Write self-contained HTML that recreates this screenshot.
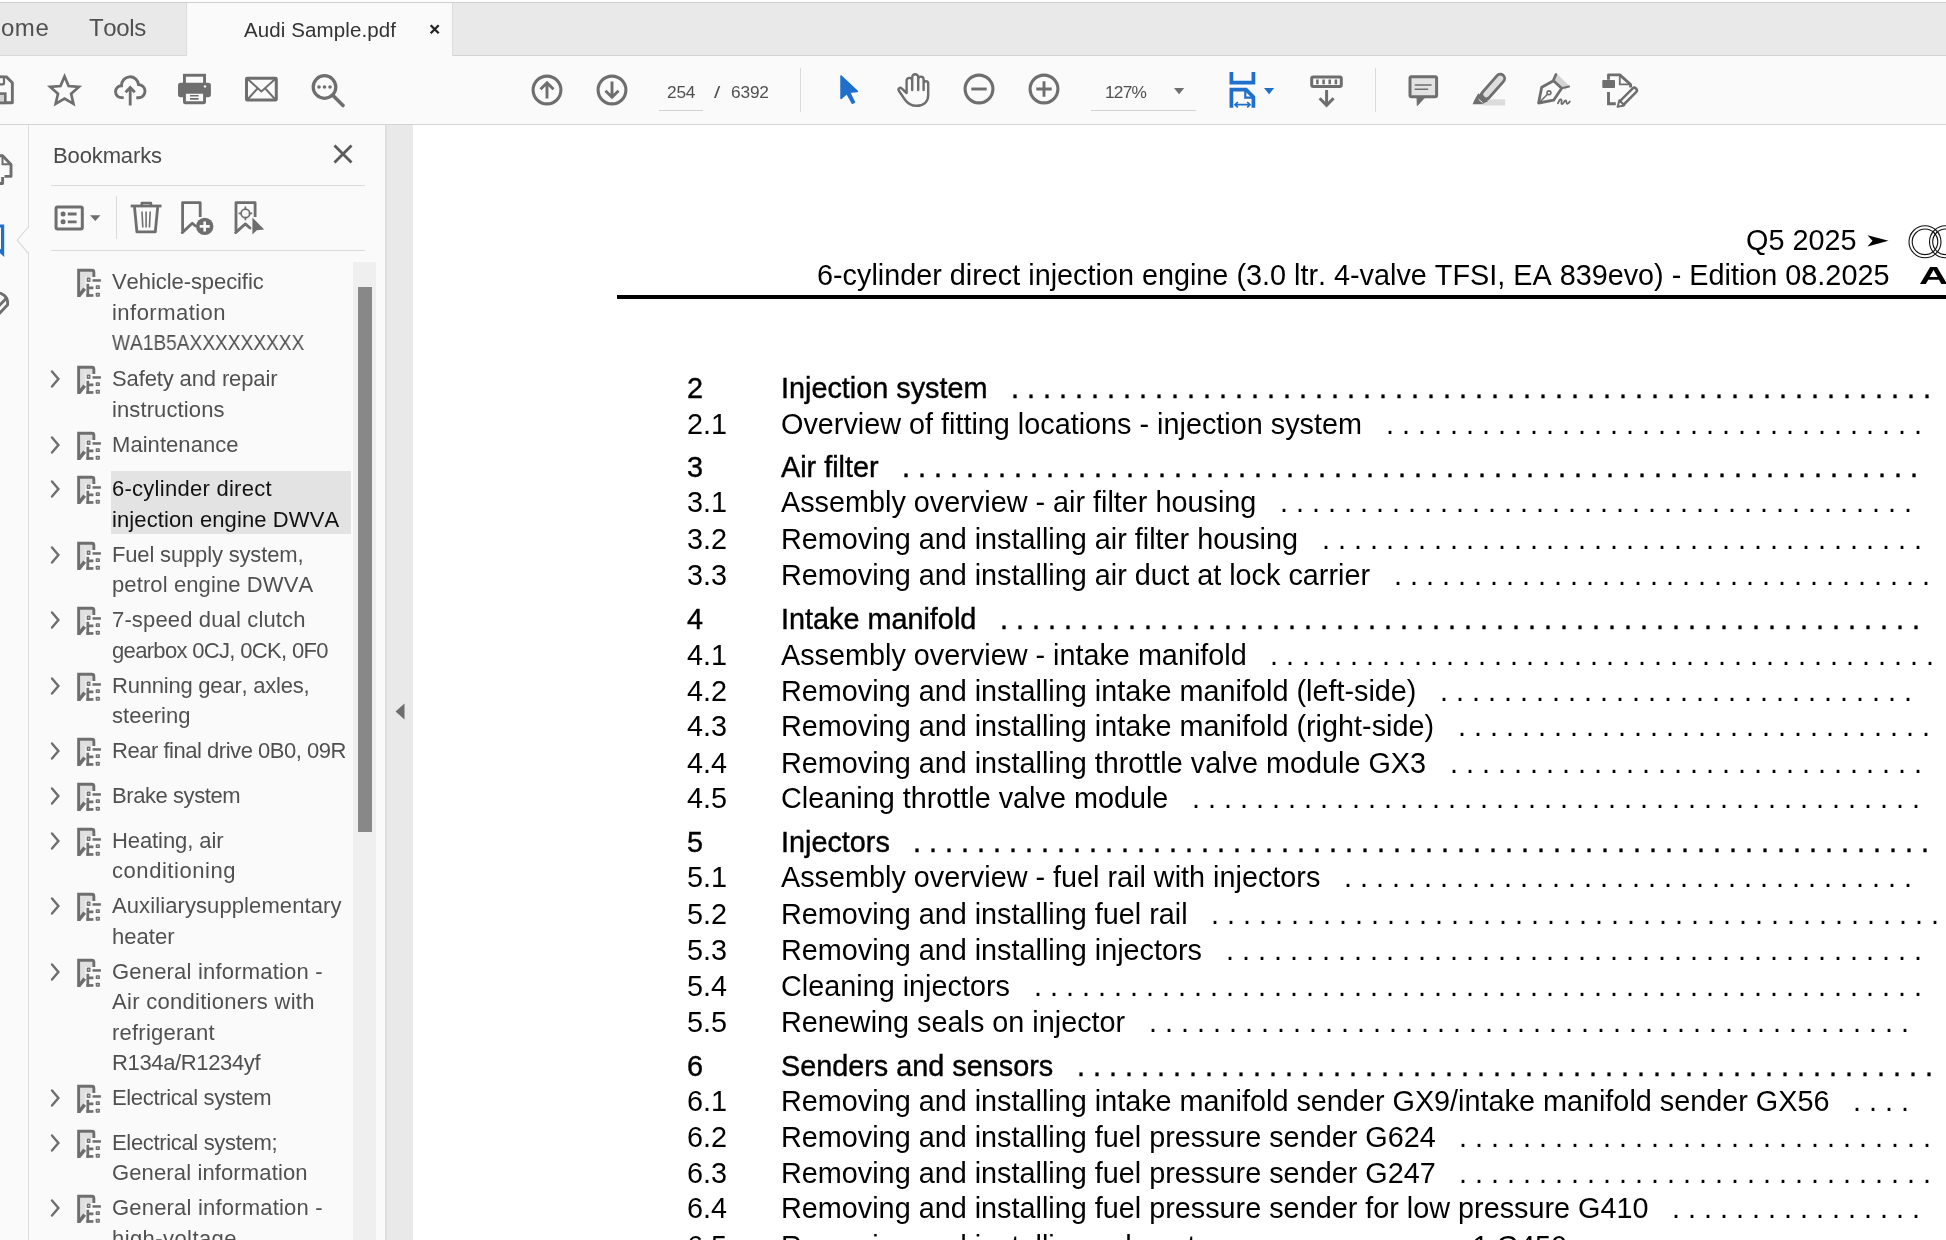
<!DOCTYPE html>
<html lang="en"><head><meta charset="utf-8"><title>Audi Sample.pdf</title>
<style>
html,body{margin:0;padding:0;}
body{width:1946px;height:1240px;overflow:hidden;position:relative;background:#fafafa;font-family:"Liberation Sans",sans-serif;}
.t{font-kerning:none;font-variant-ligatures:none;position:absolute;will-change:transform;white-space:pre;font-family:"Liberation Sans",sans-serif;}
.b{position:absolute;}
svg{position:absolute;overflow:visible;}
.hb{-webkit-text-stroke:0.42px #000;}

</style></head>
<body>
<div class="b" style="left:0px;top:0px;width:1946px;height:2px;background:#fdfdfd;"></div>
<div class="b" style="left:0px;top:2px;width:1946px;height:1px;background:#cfcfcf;"></div>
<div class="b" style="left:0px;top:3px;width:1946px;height:52px;background:#e9e9e9;"></div>
<div class="b" style="left:0px;top:55px;width:186px;height:1px;background:#d8d8d8;"></div>
<div class="b" style="left:453px;top:55px;width:1493px;height:1px;background:#d2d2d2;"></div>
<div class="b" style="left:185.5px;top:3px;width:267.5px;height:53px;background:#fafafa;border-left:1px solid #dcdcdc;border-right:1px solid #dcdcdc;box-sizing:border-box;"></div>
<div class="t" style="left:-17.30px;top:10px;font-size:24px;line-height:35px;height:35px;color:#505050;letter-spacing:0.593px;">Home</div>
<div class="t" style="left:89.30px;top:10px;font-size:24px;line-height:35px;height:35px;color:#505050;letter-spacing:-0.382px;">Tools</div>
<div class="t" style="left:244.00px;top:14px;font-size:20.5px;line-height:31px;height:31px;color:#333;letter-spacing:0.112px;">Audi Sample.pdf</div>
<svg style="left:428px;top:22px" width="14" height="14" viewBox="0 0 14 14" fill="none"><path d="M2.700 3.200 L10.700 11.200 M10.700 3.200 L2.700 11.200" stroke="#222" stroke-width="2.300"/></svg>
<div class="b" style="left:0px;top:56px;width:1946px;height:68px;background:#fafafa;"></div>
<div class="b" style="left:0px;top:124px;width:1946px;height:1px;background:#d4d4d4;"></div>
<svg style="left:309px;top:72px" width="38" height="38" viewBox="0 0 38 38" fill="none"><circle cx="15.5" cy="15" r="11.3" stroke="#6e6e6e" stroke-width="3.2"/><path d="M24 23.5 L34 33.5" stroke="#6e6e6e" stroke-width="3.6" stroke-linecap="round"/><circle cx="10" cy="15" r="1.8" fill="#6e6e6e"/><circle cx="15.5" cy="15" r="1.8" fill="#6e6e6e"/><circle cx="21" cy="15" r="1.8" fill="#6e6e6e"/></svg>
<svg style="left:528.5px;top:71.7px" width="36" height="36" viewBox="0 0 36 36" fill="none"><circle cx="18" cy="18" r="13.900" stroke="#6e6e6e" stroke-width="3.100"/><path d="M18 26.500 V11 M11.500 17.300 L18 10.800 L24.500 17.300" stroke="#6e6e6e" stroke-width="2.900"/></svg>
<svg style="left:593.9px;top:71.7px" width="36" height="36" viewBox="0 0 36 36" fill="none"><circle cx="18" cy="18" r="13.900" stroke="#6e6e6e" stroke-width="3.100"/><path d="M18 9.500 V25 M11.500 18.700 L18 25.200 L24.500 18.700" stroke="#6e6e6e" stroke-width="2.900"/></svg>
<div class="t" style="left:666.50px;top:78px;font-size:17.3px;line-height:28px;height:28px;color:#505050;letter-spacing:-0.182px;">254</div>
<div class="b" style="left:659px;top:110px;width:44px;height:1px;background:#d2d2d2;"></div>
<div class="t" style="left:713.50px;top:78px;font-size:17.3px;line-height:28px;height:28px;color:#505050;transform:scaleX(1.300);transform-origin:0 0;">/</div>
<div class="t" style="left:730.70px;top:78px;font-size:17.3px;line-height:28px;height:28px;color:#505050;letter-spacing:-0.162px;">6392</div>
<div class="b" style="left:799.5px;top:68px;width:1px;height:44px;background:#dadada;"></div>
<svg style="left:960.7px;top:71.2px" width="36" height="36" viewBox="0 0 36 36" fill="none"><circle cx="18" cy="18" r="13.900" stroke="#6e6e6e" stroke-width="3.100"/><path d="M10.300 18 H25.700" stroke="#6e6e6e" stroke-width="2.900"/></svg>
<svg style="left:1026.4px;top:71.2px" width="36" height="36" viewBox="0 0 36 36" fill="none"><circle cx="18" cy="18" r="13.900" stroke="#6e6e6e" stroke-width="3.100"/><path d="M10.300 18 H25.700 M18 10.300 V25.700" stroke="#6e6e6e" stroke-width="2.900"/></svg>
<div class="t" style="left:1105.40px;top:78px;font-size:17.3px;line-height:28px;height:28px;color:#505050;letter-spacing:-0.749px;">127%</div>
<svg style="left:1173.5px;top:87.5px" width="11" height="7" viewBox="0 0 11 7" fill="none"><path d="M0 0 H10.200 L5.100 6.200 Z" fill="#6e6e6e"/></svg>
<div class="b" style="left:1091px;top:110px;width:105px;height:1px;background:#d2d2d2;"></div>
<svg style="left:1264.3px;top:87.5px" width="11" height="7" viewBox="0 0 11 7" fill="none"><path d="M0 0 H10.200 L5.100 6.200 Z" fill="#1f6fcc"/></svg>
<div class="b" style="left:1375px;top:68px;width:1px;height:44px;background:#dadada;"></div>
<div class="b" style="left:0px;top:125px;width:28px;height:1115px;background:#fafafa;"></div>
<div class="b" style="left:28px;top:125px;width:1px;height:1115px;background:#dcdcdc;"></div>
<div class="b" style="left:29px;top:125px;width:356px;height:1115px;background:#fafafa;"></div>
<div class="b" style="left:385px;top:125px;width:28px;height:1115px;background:#e9e9e9;"></div>
<div class="b" style="left:385px;top:125px;width:2px;height:1115px;background:#dedede;"></div>
<svg style="left:395px;top:703px" width="10" height="17" viewBox="0 0 10 17" fill="none"><path d="M9.500 0.500 V16.500 L0.500 8.500 Z" fill="#6e6e6e"/></svg>
<div class="t" style="left:53.00px;top:139px;font-size:22px;line-height:33px;height:33px;color:#4a4a4a;letter-spacing:-0.129px;">Bookmarks</div>
<svg style="left:332px;top:143px" width="22" height="22" viewBox="0 0 22 22" fill="none"><path d="M2.500 2.500 L19.500 19.500 M19.500 2.500 L2.500 19.500" stroke="#5a5a5a" stroke-width="2.800"/></svg>
<div class="b" style="left:51px;top:185px;width:314px;height:1px;background:#dadada;"></div>
<div class="b" style="left:51px;top:250px;width:314px;height:1px;background:#dadada;"></div>
<div class="b" style="left:116px;top:196px;width:1px;height:42.5px;background:#dadada;"></div>
<div class="b" style="left:353px;top:262px;width:23px;height:978px;background:#efefef;"></div>
<div class="b" style="left:357.5px;top:287px;width:14px;height:545px;background:#888888;"></div>
<div class="b" style="left:110.5px;top:471px;width:240.5px;height:62.5px;background:#e3e3e3;"></div>
<svg style="left:76px;top:268px" width="28" height="31" viewBox="0 0 28 31" fill="none"><path d="M4.100 3.600 H16.500 V9 H9.500 V18.500 L4.100 23.500 Z" fill="#e0e0e0"/><path d="M2.650 29 V2.200 H15.800 Q17.850 2.200 17.850 4.200 V8.900" stroke="#6e6e6e" stroke-width="2.900"/><path d="M2.900 27.900 L8.700 20.700" stroke="#6e6e6e" stroke-width="3.600"/><path d="M11.800 15.700 V28.800 M11.800 19.850 H17.400" stroke="#6e6e6e" stroke-width="2.700"/><path d="M10.400 27.450 H17.400" stroke="#6e6e6e" stroke-width="2.700"/><rect x="10.7" y="9.6" width="3.8" height="4.3" rx="0.600" fill="#6e6e6e"/><rect x="11.95" y="11.10" width="1.300" height="1.300" fill="#cfcfcf"/><path d="M16.500 12.450 H24.900" stroke="#6e6e6e" stroke-width="2.500"/><rect x="19.7" y="17.3" width="4.2" height="3.8" rx="0.600" fill="#6e6e6e"/><rect x="21.15" y="18.55" width="1.300" height="1.300" fill="#cfcfcf"/><rect x="19.7" y="24.7" width="4.2" height="4.0" rx="0.600" fill="#6e6e6e"/><rect x="21.15" y="26.05" width="1.300" height="1.300" fill="#cfcfcf"/></svg>
<div class="t" style="left:111.50px;top:265px;font-size:22px;line-height:33px;height:33px;color:#505050;letter-spacing:-0.075px;">Vehicle-specific</div>
<div class="t" style="left:111.50px;top:296px;font-size:22px;line-height:33px;height:33px;color:#505050;letter-spacing:0.467px;">information</div>
<div class="t" style="left:111.50px;top:326px;font-size:22px;line-height:33px;height:33px;color:#505050;transform:scaleX(0.8685);transform-origin:0 0;">WA1B5AXXXXXXXXX</div>
<svg style="left:49px;top:369.3px" width="14" height="20" viewBox="0 0 14 20" fill="none"><path d="M3 2.500 L9.400 10 L3 17.500" stroke="#6e6e6e" stroke-width="2.400" stroke-linecap="round" stroke-linejoin="miter"/></svg>
<svg style="left:76px;top:365px" width="28" height="31" viewBox="0 0 28 31" fill="none"><path d="M4.100 3.600 H16.500 V9 H9.500 V18.500 L4.100 23.500 Z" fill="#e0e0e0"/><path d="M2.650 29 V2.200 H15.800 Q17.850 2.200 17.850 4.200 V8.900" stroke="#6e6e6e" stroke-width="2.900"/><path d="M2.900 27.900 L8.700 20.700" stroke="#6e6e6e" stroke-width="3.600"/><path d="M11.800 15.700 V28.800 M11.800 19.850 H17.400" stroke="#6e6e6e" stroke-width="2.700"/><path d="M10.400 27.450 H17.400" stroke="#6e6e6e" stroke-width="2.700"/><rect x="10.7" y="9.6" width="3.8" height="4.3" rx="0.600" fill="#6e6e6e"/><rect x="11.95" y="11.10" width="1.300" height="1.300" fill="#cfcfcf"/><path d="M16.500 12.450 H24.900" stroke="#6e6e6e" stroke-width="2.500"/><rect x="19.7" y="17.3" width="4.2" height="3.8" rx="0.600" fill="#6e6e6e"/><rect x="21.15" y="18.55" width="1.300" height="1.300" fill="#cfcfcf"/><rect x="19.7" y="24.7" width="4.2" height="4.0" rx="0.600" fill="#6e6e6e"/><rect x="21.15" y="26.05" width="1.300" height="1.300" fill="#cfcfcf"/></svg>
<div class="t" style="left:111.50px;top:362px;font-size:22px;line-height:33px;height:33px;color:#505050;letter-spacing:-0.128px;">Safety and repair</div>
<div class="t" style="left:111.50px;top:393px;font-size:22px;line-height:33px;height:33px;color:#505050;letter-spacing:0.112px;">instructions</div>
<svg style="left:49px;top:435.3px" width="14" height="20" viewBox="0 0 14 20" fill="none"><path d="M3 2.500 L9.400 10 L3 17.500" stroke="#6e6e6e" stroke-width="2.400" stroke-linecap="round" stroke-linejoin="miter"/></svg>
<svg style="left:76px;top:431px" width="28" height="31" viewBox="0 0 28 31" fill="none"><path d="M4.100 3.600 H16.500 V9 H9.500 V18.500 L4.100 23.500 Z" fill="#e0e0e0"/><path d="M2.650 29 V2.200 H15.800 Q17.850 2.200 17.850 4.200 V8.900" stroke="#6e6e6e" stroke-width="2.900"/><path d="M2.900 27.900 L8.700 20.700" stroke="#6e6e6e" stroke-width="3.600"/><path d="M11.800 15.700 V28.800 M11.800 19.850 H17.400" stroke="#6e6e6e" stroke-width="2.700"/><path d="M10.400 27.450 H17.400" stroke="#6e6e6e" stroke-width="2.700"/><rect x="10.7" y="9.6" width="3.8" height="4.3" rx="0.600" fill="#6e6e6e"/><rect x="11.95" y="11.10" width="1.300" height="1.300" fill="#cfcfcf"/><path d="M16.500 12.450 H24.900" stroke="#6e6e6e" stroke-width="2.500"/><rect x="19.7" y="17.3" width="4.2" height="3.8" rx="0.600" fill="#6e6e6e"/><rect x="21.15" y="18.55" width="1.300" height="1.300" fill="#cfcfcf"/><rect x="19.7" y="24.7" width="4.2" height="4.0" rx="0.600" fill="#6e6e6e"/><rect x="21.15" y="26.05" width="1.300" height="1.300" fill="#cfcfcf"/></svg>
<div class="t" style="left:111.50px;top:428px;font-size:22px;line-height:33px;height:33px;color:#505050;letter-spacing:0.053px;">Maintenance</div>
<svg style="left:49px;top:479.3px" width="14" height="20" viewBox="0 0 14 20" fill="none"><path d="M3 2.500 L9.400 10 L3 17.500" stroke="#6e6e6e" stroke-width="2.400" stroke-linecap="round" stroke-linejoin="miter"/></svg>
<svg style="left:76px;top:475px" width="28" height="31" viewBox="0 0 28 31" fill="none"><path d="M4.100 3.600 H16.500 V9 H9.500 V18.500 L4.100 23.500 Z" fill="#e0e0e0"/><path d="M2.650 29 V2.200 H15.800 Q17.850 2.200 17.850 4.200 V8.900" stroke="#6e6e6e" stroke-width="2.900"/><path d="M2.900 27.900 L8.700 20.700" stroke="#6e6e6e" stroke-width="3.600"/><path d="M11.800 15.700 V28.800 M11.800 19.850 H17.400" stroke="#6e6e6e" stroke-width="2.700"/><path d="M10.400 27.450 H17.400" stroke="#6e6e6e" stroke-width="2.700"/><rect x="10.7" y="9.6" width="3.8" height="4.3" rx="0.600" fill="#6e6e6e"/><rect x="11.95" y="11.10" width="1.300" height="1.300" fill="#cfcfcf"/><path d="M16.500 12.450 H24.900" stroke="#6e6e6e" stroke-width="2.500"/><rect x="19.7" y="17.3" width="4.2" height="3.8" rx="0.600" fill="#6e6e6e"/><rect x="21.15" y="18.55" width="1.300" height="1.300" fill="#cfcfcf"/><rect x="19.7" y="24.7" width="4.2" height="4.0" rx="0.600" fill="#6e6e6e"/><rect x="21.15" y="26.05" width="1.300" height="1.300" fill="#cfcfcf"/></svg>
<div class="t" style="left:111.50px;top:472px;font-size:22px;line-height:33px;height:33px;color:#111;letter-spacing:0.264px;">6-cylinder direct</div>
<div class="t" style="left:111.50px;top:503px;font-size:22px;line-height:33px;height:33px;color:#111;letter-spacing:0.106px;">injection engine DWVA</div>
<svg style="left:49px;top:545.3px" width="14" height="20" viewBox="0 0 14 20" fill="none"><path d="M3 2.500 L9.400 10 L3 17.500" stroke="#6e6e6e" stroke-width="2.400" stroke-linecap="round" stroke-linejoin="miter"/></svg>
<svg style="left:76px;top:541px" width="28" height="31" viewBox="0 0 28 31" fill="none"><path d="M4.100 3.600 H16.500 V9 H9.500 V18.500 L4.100 23.500 Z" fill="#e0e0e0"/><path d="M2.650 29 V2.200 H15.800 Q17.850 2.200 17.850 4.200 V8.900" stroke="#6e6e6e" stroke-width="2.900"/><path d="M2.900 27.900 L8.700 20.700" stroke="#6e6e6e" stroke-width="3.600"/><path d="M11.800 15.700 V28.800 M11.800 19.850 H17.400" stroke="#6e6e6e" stroke-width="2.700"/><path d="M10.400 27.450 H17.400" stroke="#6e6e6e" stroke-width="2.700"/><rect x="10.7" y="9.6" width="3.8" height="4.3" rx="0.600" fill="#6e6e6e"/><rect x="11.95" y="11.10" width="1.300" height="1.300" fill="#cfcfcf"/><path d="M16.500 12.450 H24.900" stroke="#6e6e6e" stroke-width="2.500"/><rect x="19.7" y="17.3" width="4.2" height="3.8" rx="0.600" fill="#6e6e6e"/><rect x="21.15" y="18.55" width="1.300" height="1.300" fill="#cfcfcf"/><rect x="19.7" y="24.7" width="4.2" height="4.0" rx="0.600" fill="#6e6e6e"/><rect x="21.15" y="26.05" width="1.300" height="1.300" fill="#cfcfcf"/></svg>
<div class="t" style="left:111.50px;top:538px;font-size:22px;line-height:33px;height:33px;color:#505050;letter-spacing:-0.161px;">Fuel supply system,</div>
<div class="t" style="left:111.50px;top:568px;font-size:22px;line-height:33px;height:33px;color:#505050;letter-spacing:0.106px;">petrol engine DWVA</div>
<svg style="left:49px;top:610.3px" width="14" height="20" viewBox="0 0 14 20" fill="none"><path d="M3 2.500 L9.400 10 L3 17.500" stroke="#6e6e6e" stroke-width="2.400" stroke-linecap="round" stroke-linejoin="miter"/></svg>
<svg style="left:76px;top:606px" width="28" height="31" viewBox="0 0 28 31" fill="none"><path d="M4.100 3.600 H16.500 V9 H9.500 V18.500 L4.100 23.500 Z" fill="#e0e0e0"/><path d="M2.650 29 V2.200 H15.800 Q17.850 2.200 17.850 4.200 V8.900" stroke="#6e6e6e" stroke-width="2.900"/><path d="M2.900 27.900 L8.700 20.700" stroke="#6e6e6e" stroke-width="3.600"/><path d="M11.800 15.700 V28.800 M11.800 19.850 H17.400" stroke="#6e6e6e" stroke-width="2.700"/><path d="M10.400 27.450 H17.400" stroke="#6e6e6e" stroke-width="2.700"/><rect x="10.7" y="9.6" width="3.8" height="4.3" rx="0.600" fill="#6e6e6e"/><rect x="11.95" y="11.10" width="1.300" height="1.300" fill="#cfcfcf"/><path d="M16.500 12.450 H24.900" stroke="#6e6e6e" stroke-width="2.500"/><rect x="19.7" y="17.3" width="4.2" height="3.8" rx="0.600" fill="#6e6e6e"/><rect x="21.15" y="18.55" width="1.300" height="1.300" fill="#cfcfcf"/><rect x="19.7" y="24.7" width="4.2" height="4.0" rx="0.600" fill="#6e6e6e"/><rect x="21.15" y="26.05" width="1.300" height="1.300" fill="#cfcfcf"/></svg>
<div class="t" style="left:111.50px;top:603px;font-size:22px;line-height:33px;height:33px;color:#505050;letter-spacing:0.150px;">7-speed dual clutch</div>
<div class="t" style="left:111.50px;top:634px;font-size:22px;line-height:33px;height:33px;color:#505050;letter-spacing:-0.670px;">gearbox 0CJ, 0CK, 0F0</div>
<svg style="left:49px;top:676.3px" width="14" height="20" viewBox="0 0 14 20" fill="none"><path d="M3 2.500 L9.400 10 L3 17.500" stroke="#6e6e6e" stroke-width="2.400" stroke-linecap="round" stroke-linejoin="miter"/></svg>
<svg style="left:76px;top:672px" width="28" height="31" viewBox="0 0 28 31" fill="none"><path d="M4.100 3.600 H16.500 V9 H9.500 V18.500 L4.100 23.500 Z" fill="#e0e0e0"/><path d="M2.650 29 V2.200 H15.800 Q17.850 2.200 17.850 4.200 V8.900" stroke="#6e6e6e" stroke-width="2.900"/><path d="M2.900 27.900 L8.700 20.700" stroke="#6e6e6e" stroke-width="3.600"/><path d="M11.800 15.700 V28.800 M11.800 19.850 H17.400" stroke="#6e6e6e" stroke-width="2.700"/><path d="M10.400 27.450 H17.400" stroke="#6e6e6e" stroke-width="2.700"/><rect x="10.7" y="9.6" width="3.8" height="4.3" rx="0.600" fill="#6e6e6e"/><rect x="11.95" y="11.10" width="1.300" height="1.300" fill="#cfcfcf"/><path d="M16.500 12.450 H24.900" stroke="#6e6e6e" stroke-width="2.500"/><rect x="19.7" y="17.3" width="4.2" height="3.8" rx="0.600" fill="#6e6e6e"/><rect x="21.15" y="18.55" width="1.300" height="1.300" fill="#cfcfcf"/><rect x="19.7" y="24.7" width="4.2" height="4.0" rx="0.600" fill="#6e6e6e"/><rect x="21.15" y="26.05" width="1.300" height="1.300" fill="#cfcfcf"/></svg>
<div class="t" style="left:111.50px;top:669px;font-size:22px;line-height:33px;height:33px;color:#505050;letter-spacing:-0.215px;">Running gear, axles,</div>
<div class="t" style="left:111.50px;top:699px;font-size:22px;line-height:33px;height:33px;color:#505050;letter-spacing:0.033px;">steering</div>
<svg style="left:49px;top:741.3px" width="14" height="20" viewBox="0 0 14 20" fill="none"><path d="M3 2.500 L9.400 10 L3 17.500" stroke="#6e6e6e" stroke-width="2.400" stroke-linecap="round" stroke-linejoin="miter"/></svg>
<svg style="left:76px;top:737px" width="28" height="31" viewBox="0 0 28 31" fill="none"><path d="M4.100 3.600 H16.500 V9 H9.500 V18.500 L4.100 23.500 Z" fill="#e0e0e0"/><path d="M2.650 29 V2.200 H15.800 Q17.850 2.200 17.850 4.200 V8.900" stroke="#6e6e6e" stroke-width="2.900"/><path d="M2.900 27.900 L8.700 20.700" stroke="#6e6e6e" stroke-width="3.600"/><path d="M11.800 15.700 V28.800 M11.800 19.850 H17.400" stroke="#6e6e6e" stroke-width="2.700"/><path d="M10.400 27.450 H17.400" stroke="#6e6e6e" stroke-width="2.700"/><rect x="10.7" y="9.6" width="3.8" height="4.3" rx="0.600" fill="#6e6e6e"/><rect x="11.95" y="11.10" width="1.300" height="1.300" fill="#cfcfcf"/><path d="M16.500 12.450 H24.900" stroke="#6e6e6e" stroke-width="2.500"/><rect x="19.7" y="17.3" width="4.2" height="3.8" rx="0.600" fill="#6e6e6e"/><rect x="21.15" y="18.55" width="1.300" height="1.300" fill="#cfcfcf"/><rect x="19.7" y="24.7" width="4.2" height="4.0" rx="0.600" fill="#6e6e6e"/><rect x="21.15" y="26.05" width="1.300" height="1.300" fill="#cfcfcf"/></svg>
<div class="t" style="left:111.50px;top:734px;font-size:22px;line-height:33px;height:33px;color:#505050;letter-spacing:-0.471px;">Rear final drive 0B0, 09R</div>
<svg style="left:49px;top:786.3px" width="14" height="20" viewBox="0 0 14 20" fill="none"><path d="M3 2.500 L9.400 10 L3 17.500" stroke="#6e6e6e" stroke-width="2.400" stroke-linecap="round" stroke-linejoin="miter"/></svg>
<svg style="left:76px;top:782px" width="28" height="31" viewBox="0 0 28 31" fill="none"><path d="M4.100 3.600 H16.500 V9 H9.500 V18.500 L4.100 23.500 Z" fill="#e0e0e0"/><path d="M2.650 29 V2.200 H15.800 Q17.850 2.200 17.850 4.200 V8.900" stroke="#6e6e6e" stroke-width="2.900"/><path d="M2.900 27.900 L8.700 20.700" stroke="#6e6e6e" stroke-width="3.600"/><path d="M11.800 15.700 V28.800 M11.800 19.850 H17.400" stroke="#6e6e6e" stroke-width="2.700"/><path d="M10.400 27.450 H17.400" stroke="#6e6e6e" stroke-width="2.700"/><rect x="10.7" y="9.6" width="3.8" height="4.3" rx="0.600" fill="#6e6e6e"/><rect x="11.95" y="11.10" width="1.300" height="1.300" fill="#cfcfcf"/><path d="M16.500 12.450 H24.900" stroke="#6e6e6e" stroke-width="2.500"/><rect x="19.7" y="17.3" width="4.2" height="3.8" rx="0.600" fill="#6e6e6e"/><rect x="21.15" y="18.55" width="1.300" height="1.300" fill="#cfcfcf"/><rect x="19.7" y="24.7" width="4.2" height="4.0" rx="0.600" fill="#6e6e6e"/><rect x="21.15" y="26.05" width="1.300" height="1.300" fill="#cfcfcf"/></svg>
<div class="t" style="left:111.50px;top:779px;font-size:22px;line-height:33px;height:33px;color:#505050;letter-spacing:-0.432px;">Brake system</div>
<svg style="left:49px;top:831.3px" width="14" height="20" viewBox="0 0 14 20" fill="none"><path d="M3 2.500 L9.400 10 L3 17.500" stroke="#6e6e6e" stroke-width="2.400" stroke-linecap="round" stroke-linejoin="miter"/></svg>
<svg style="left:76px;top:827px" width="28" height="31" viewBox="0 0 28 31" fill="none"><path d="M4.100 3.600 H16.500 V9 H9.500 V18.500 L4.100 23.500 Z" fill="#e0e0e0"/><path d="M2.650 29 V2.200 H15.800 Q17.850 2.200 17.850 4.200 V8.900" stroke="#6e6e6e" stroke-width="2.900"/><path d="M2.900 27.900 L8.700 20.700" stroke="#6e6e6e" stroke-width="3.600"/><path d="M11.800 15.700 V28.800 M11.800 19.850 H17.400" stroke="#6e6e6e" stroke-width="2.700"/><path d="M10.400 27.450 H17.400" stroke="#6e6e6e" stroke-width="2.700"/><rect x="10.7" y="9.6" width="3.8" height="4.3" rx="0.600" fill="#6e6e6e"/><rect x="11.95" y="11.10" width="1.300" height="1.300" fill="#cfcfcf"/><path d="M16.500 12.450 H24.900" stroke="#6e6e6e" stroke-width="2.500"/><rect x="19.7" y="17.3" width="4.2" height="3.8" rx="0.600" fill="#6e6e6e"/><rect x="21.15" y="18.55" width="1.300" height="1.300" fill="#cfcfcf"/><rect x="19.7" y="24.7" width="4.2" height="4.0" rx="0.600" fill="#6e6e6e"/><rect x="21.15" y="26.05" width="1.300" height="1.300" fill="#cfcfcf"/></svg>
<div class="t" style="left:111.50px;top:824px;font-size:22px;line-height:33px;height:33px;color:#505050;letter-spacing:-0.091px;">Heating, air</div>
<div class="t" style="left:111.50px;top:854px;font-size:22px;line-height:33px;height:33px;color:#505050;letter-spacing:0.552px;">conditioning</div>
<svg style="left:49px;top:896.3px" width="14" height="20" viewBox="0 0 14 20" fill="none"><path d="M3 2.500 L9.400 10 L3 17.500" stroke="#6e6e6e" stroke-width="2.400" stroke-linecap="round" stroke-linejoin="miter"/></svg>
<svg style="left:76px;top:892px" width="28" height="31" viewBox="0 0 28 31" fill="none"><path d="M4.100 3.600 H16.500 V9 H9.500 V18.500 L4.100 23.500 Z" fill="#e0e0e0"/><path d="M2.650 29 V2.200 H15.800 Q17.850 2.200 17.850 4.200 V8.900" stroke="#6e6e6e" stroke-width="2.900"/><path d="M2.900 27.900 L8.700 20.700" stroke="#6e6e6e" stroke-width="3.600"/><path d="M11.800 15.700 V28.800 M11.800 19.850 H17.400" stroke="#6e6e6e" stroke-width="2.700"/><path d="M10.400 27.450 H17.400" stroke="#6e6e6e" stroke-width="2.700"/><rect x="10.7" y="9.6" width="3.8" height="4.3" rx="0.600" fill="#6e6e6e"/><rect x="11.95" y="11.10" width="1.300" height="1.300" fill="#cfcfcf"/><path d="M16.500 12.450 H24.900" stroke="#6e6e6e" stroke-width="2.500"/><rect x="19.7" y="17.3" width="4.2" height="3.8" rx="0.600" fill="#6e6e6e"/><rect x="21.15" y="18.55" width="1.300" height="1.300" fill="#cfcfcf"/><rect x="19.7" y="24.7" width="4.2" height="4.0" rx="0.600" fill="#6e6e6e"/><rect x="21.15" y="26.05" width="1.300" height="1.300" fill="#cfcfcf"/></svg>
<div class="t" style="left:111.50px;top:889px;font-size:22px;line-height:33px;height:33px;color:#505050;letter-spacing:0.098px;">Auxiliarysupplementary</div>
<div class="t" style="left:111.50px;top:920px;font-size:22px;line-height:33px;height:33px;color:#505050;letter-spacing:0.024px;">heater</div>
<svg style="left:49px;top:962.3px" width="14" height="20" viewBox="0 0 14 20" fill="none"><path d="M3 2.500 L9.400 10 L3 17.500" stroke="#6e6e6e" stroke-width="2.400" stroke-linecap="round" stroke-linejoin="miter"/></svg>
<svg style="left:76px;top:958px" width="28" height="31" viewBox="0 0 28 31" fill="none"><path d="M4.100 3.600 H16.500 V9 H9.500 V18.500 L4.100 23.500 Z" fill="#e0e0e0"/><path d="M2.650 29 V2.200 H15.800 Q17.850 2.200 17.850 4.200 V8.900" stroke="#6e6e6e" stroke-width="2.900"/><path d="M2.900 27.900 L8.700 20.700" stroke="#6e6e6e" stroke-width="3.600"/><path d="M11.800 15.700 V28.800 M11.800 19.850 H17.400" stroke="#6e6e6e" stroke-width="2.700"/><path d="M10.400 27.450 H17.400" stroke="#6e6e6e" stroke-width="2.700"/><rect x="10.7" y="9.6" width="3.8" height="4.3" rx="0.600" fill="#6e6e6e"/><rect x="11.95" y="11.10" width="1.300" height="1.300" fill="#cfcfcf"/><path d="M16.500 12.450 H24.900" stroke="#6e6e6e" stroke-width="2.500"/><rect x="19.7" y="17.3" width="4.2" height="3.8" rx="0.600" fill="#6e6e6e"/><rect x="21.15" y="18.55" width="1.300" height="1.300" fill="#cfcfcf"/><rect x="19.7" y="24.7" width="4.2" height="4.0" rx="0.600" fill="#6e6e6e"/><rect x="21.15" y="26.05" width="1.300" height="1.300" fill="#cfcfcf"/></svg>
<div class="t" style="left:111.50px;top:955px;font-size:22px;line-height:33px;height:33px;color:#505050;letter-spacing:0.193px;">General information -</div>
<div class="t" style="left:111.50px;top:985px;font-size:22px;line-height:33px;height:33px;color:#505050;letter-spacing:0.282px;">Air conditioners with</div>
<div class="t" style="left:111.50px;top:1016px;font-size:22px;line-height:33px;height:33px;color:#505050;letter-spacing:0.223px;">refrigerant</div>
<div class="t" style="left:111.50px;top:1046px;font-size:22px;line-height:33px;height:33px;color:#505050;letter-spacing:-0.365px;">R134a/R1234yf</div>
<svg style="left:49px;top:1088.3px" width="14" height="20" viewBox="0 0 14 20" fill="none"><path d="M3 2.500 L9.400 10 L3 17.500" stroke="#6e6e6e" stroke-width="2.400" stroke-linecap="round" stroke-linejoin="miter"/></svg>
<svg style="left:76px;top:1084px" width="28" height="31" viewBox="0 0 28 31" fill="none"><path d="M4.100 3.600 H16.500 V9 H9.500 V18.500 L4.100 23.500 Z" fill="#e0e0e0"/><path d="M2.650 29 V2.200 H15.800 Q17.850 2.200 17.850 4.200 V8.900" stroke="#6e6e6e" stroke-width="2.900"/><path d="M2.900 27.900 L8.700 20.700" stroke="#6e6e6e" stroke-width="3.600"/><path d="M11.800 15.700 V28.800 M11.800 19.850 H17.400" stroke="#6e6e6e" stroke-width="2.700"/><path d="M10.400 27.450 H17.400" stroke="#6e6e6e" stroke-width="2.700"/><rect x="10.7" y="9.6" width="3.8" height="4.3" rx="0.600" fill="#6e6e6e"/><rect x="11.95" y="11.10" width="1.300" height="1.300" fill="#cfcfcf"/><path d="M16.500 12.450 H24.900" stroke="#6e6e6e" stroke-width="2.500"/><rect x="19.7" y="17.3" width="4.2" height="3.8" rx="0.600" fill="#6e6e6e"/><rect x="21.15" y="18.55" width="1.300" height="1.300" fill="#cfcfcf"/><rect x="19.7" y="24.7" width="4.2" height="4.0" rx="0.600" fill="#6e6e6e"/><rect x="21.15" y="26.05" width="1.300" height="1.300" fill="#cfcfcf"/></svg>
<div class="t" style="left:111.50px;top:1081px;font-size:22px;line-height:33px;height:33px;color:#505050;letter-spacing:-0.346px;">Electrical system</div>
<svg style="left:49px;top:1133.3px" width="14" height="20" viewBox="0 0 14 20" fill="none"><path d="M3 2.500 L9.400 10 L3 17.500" stroke="#6e6e6e" stroke-width="2.400" stroke-linecap="round" stroke-linejoin="miter"/></svg>
<svg style="left:76px;top:1129px" width="28" height="31" viewBox="0 0 28 31" fill="none"><path d="M4.100 3.600 H16.500 V9 H9.500 V18.500 L4.100 23.500 Z" fill="#e0e0e0"/><path d="M2.650 29 V2.200 H15.800 Q17.850 2.200 17.850 4.200 V8.900" stroke="#6e6e6e" stroke-width="2.900"/><path d="M2.900 27.900 L8.700 20.700" stroke="#6e6e6e" stroke-width="3.600"/><path d="M11.800 15.700 V28.800 M11.800 19.850 H17.400" stroke="#6e6e6e" stroke-width="2.700"/><path d="M10.400 27.450 H17.400" stroke="#6e6e6e" stroke-width="2.700"/><rect x="10.7" y="9.6" width="3.8" height="4.3" rx="0.600" fill="#6e6e6e"/><rect x="11.95" y="11.10" width="1.300" height="1.300" fill="#cfcfcf"/><path d="M16.500 12.450 H24.900" stroke="#6e6e6e" stroke-width="2.500"/><rect x="19.7" y="17.3" width="4.2" height="3.8" rx="0.600" fill="#6e6e6e"/><rect x="21.15" y="18.55" width="1.300" height="1.300" fill="#cfcfcf"/><rect x="19.7" y="24.7" width="4.2" height="4.0" rx="0.600" fill="#6e6e6e"/><rect x="21.15" y="26.05" width="1.300" height="1.300" fill="#cfcfcf"/></svg>
<div class="t" style="left:111.50px;top:1126px;font-size:22px;line-height:33px;height:33px;color:#505050;letter-spacing:-0.332px;">Electrical system;</div>
<div class="t" style="left:111.50px;top:1156px;font-size:22px;line-height:33px;height:33px;color:#505050;letter-spacing:0.127px;">General information</div>
<svg style="left:49px;top:1198.3px" width="14" height="20" viewBox="0 0 14 20" fill="none"><path d="M3 2.500 L9.400 10 L3 17.500" stroke="#6e6e6e" stroke-width="2.400" stroke-linecap="round" stroke-linejoin="miter"/></svg>
<svg style="left:76px;top:1194px" width="28" height="31" viewBox="0 0 28 31" fill="none"><path d="M4.100 3.600 H16.500 V9 H9.500 V18.500 L4.100 23.500 Z" fill="#e0e0e0"/><path d="M2.650 29 V2.200 H15.800 Q17.850 2.200 17.850 4.200 V8.900" stroke="#6e6e6e" stroke-width="2.900"/><path d="M2.900 27.900 L8.700 20.700" stroke="#6e6e6e" stroke-width="3.600"/><path d="M11.800 15.700 V28.800 M11.800 19.850 H17.400" stroke="#6e6e6e" stroke-width="2.700"/><path d="M10.400 27.450 H17.400" stroke="#6e6e6e" stroke-width="2.700"/><rect x="10.7" y="9.6" width="3.8" height="4.3" rx="0.600" fill="#6e6e6e"/><rect x="11.95" y="11.10" width="1.300" height="1.300" fill="#cfcfcf"/><path d="M16.500 12.450 H24.900" stroke="#6e6e6e" stroke-width="2.500"/><rect x="19.7" y="17.3" width="4.2" height="3.8" rx="0.600" fill="#6e6e6e"/><rect x="21.15" y="18.55" width="1.300" height="1.300" fill="#cfcfcf"/><rect x="19.7" y="24.7" width="4.2" height="4.0" rx="0.600" fill="#6e6e6e"/><rect x="21.15" y="26.05" width="1.300" height="1.300" fill="#cfcfcf"/></svg>
<div class="t" style="left:111.50px;top:1191px;font-size:22px;line-height:33px;height:33px;color:#505050;letter-spacing:0.193px;">General information -</div>
<div class="t" style="left:111.50px;top:1222px;font-size:22px;line-height:33px;height:33px;color:#505050;letter-spacing:0.422px;">high-voltage</div>
<div class="b" style="left:413px;top:125px;width:1533px;height:1115px;background:#ffffff;"></div>
<div class="t" style="left:817.10px;top:255px;font-size:28.8px;line-height:40px;height:40px;color:#000;">6-cylinder direct injection engine (3.0 ltr. 4-valve TFSI, EA 839evo) - Edition 08.2025</div>
<div class="t" style="left:1746.00px;top:220px;font-size:28.8px;line-height:40px;height:40px;color:#000;">Q5 2025</div>
<svg style="left:1866px;top:234px" width="24" height="14" viewBox="0 0 24 14" fill="none"><path d="M1.500 1.200 L22.500 6.800 L1.500 12.500 L6.500 6.800 Z" fill="#000"/></svg>
<div class="b" style="left:617px;top:294.7px;width:1329px;height:3.9px;background:#000;"></div>
<svg style="left:0;top:0" width="1946" height="1240" viewBox="0 0 1946 1240" fill="none"><circle cx="1925" cy="241.800" r="16" stroke="#111" stroke-width="1.100"/><circle cx="1925" cy="241.800" r="12.800" stroke="#111" stroke-width="1.100"/><circle cx="1945.5" cy="241.800" r="16" stroke="#111" stroke-width="1.100"/><circle cx="1945.5" cy="241.800" r="12.800" stroke="#111" stroke-width="1.100"/><circle cx="1966" cy="241.800" r="16" stroke="#111" stroke-width="1.100"/><circle cx="1966" cy="241.800" r="12.800" stroke="#111" stroke-width="1.100"/></svg>
<div class="t" style="left:1918.70px;top:259px;font-size:23.5px;line-height:34px;height:34px;color:#000;font-weight:bold;transform:scaleX(1.72);transform-origin:0 0;letter-spacing:0.500px;">Audi</div>
<div class="t hb" style="left:687.40px;top:368px;font-size:28.8px;line-height:40px;height:40px;color:#000;">2</div>
<div class="t hb" style="left:780.60px;top:368px;font-size:28.8px;line-height:40px;height:40px;color:#000;">Injection system</div>
<div class="t hb" style="left:1011.08px;top:368px;font-size:28.8px;line-height:40px;height:40px;color:#000;">. . . . . . . . . . . . . . . . . . . . . . . . . . . . . . . . . . . . . . . . . . . . . . . . . . . . . . . . . .</div>
<div class="t" style="left:687.40px;top:404px;font-size:28.8px;line-height:40px;height:40px;color:#000;">2.1</div>
<div class="t" style="left:780.60px;top:404px;font-size:28.8px;line-height:40px;height:40px;color:#000;">Overview of fitting locations - injection system</div>
<div class="t" style="left:1385.62px;top:404px;font-size:28.8px;line-height:40px;height:40px;color:#000;">. . . . . . . . . . . . . . . . . . . . . . . . . . . . . . . . . .</div>
<div class="t hb" style="left:687.40px;top:447px;font-size:28.8px;line-height:40px;height:40px;color:#000;">3</div>
<div class="t hb" style="left:780.60px;top:447px;font-size:28.8px;line-height:40px;height:40px;color:#000;">Air filter</div>
<div class="t hb" style="left:902.21px;top:447px;font-size:28.8px;line-height:40px;height:40px;color:#000;">. . . . . . . . . . . . . . . . . . . . . . . . . . . . . . . . . . . . . . . . . . . . . . . . . . . . . . . . . . . . . . . .</div>
<div class="t" style="left:687.40px;top:482px;font-size:28.8px;line-height:40px;height:40px;color:#000;">3.1</div>
<div class="t" style="left:780.60px;top:482px;font-size:28.8px;line-height:40px;height:40px;color:#000;">Assembly overview - air filter housing</div>
<div class="t" style="left:1279.97px;top:482px;font-size:28.8px;line-height:40px;height:40px;color:#000;">. . . . . . . . . . . . . . . . . . . . . . . . . . . . . . . . . . . . . . . .</div>
<div class="t" style="left:687.40px;top:519px;font-size:28.8px;line-height:40px;height:40px;color:#000;">3.2</div>
<div class="t" style="left:780.60px;top:519px;font-size:28.8px;line-height:40px;height:40px;color:#000;">Removing and installing air filter housing</div>
<div class="t" style="left:1321.68px;top:519px;font-size:28.8px;line-height:40px;height:40px;color:#000;">. . . . . . . . . . . . . . . . . . . . . . . . . . . . . . . . . . . . . .</div>
<div class="t" style="left:687.40px;top:555px;font-size:28.8px;line-height:40px;height:40px;color:#000;">3.3</div>
<div class="t" style="left:780.60px;top:555px;font-size:28.8px;line-height:40px;height:40px;color:#000;">Removing and installing air duct at lock carrier</div>
<div class="t" style="left:1393.67px;top:555px;font-size:28.8px;line-height:40px;height:40px;color:#000;">. . . . . . . . . . . . . . . . . . . . . . . . . . . . . . . . . .</div>
<div class="t hb" style="left:687.40px;top:599px;font-size:28.8px;line-height:40px;height:40px;color:#000;">4</div>
<div class="t hb" style="left:780.60px;top:599px;font-size:28.8px;line-height:40px;height:40px;color:#000;">Intake manifold</div>
<div class="t hb" style="left:999.91px;top:599px;font-size:28.8px;line-height:40px;height:40px;color:#000;">. . . . . . . . . . . . . . . . . . . . . . . . . . . . . . . . . . . . . . . . . . . . . . . . . . . . . . . . . .</div>
<div class="t" style="left:687.40px;top:635px;font-size:28.8px;line-height:40px;height:40px;color:#000;">4.1</div>
<div class="t" style="left:780.60px;top:635px;font-size:28.8px;line-height:40px;height:40px;color:#000;">Assembly overview - intake manifold</div>
<div class="t" style="left:1270.38px;top:635px;font-size:28.8px;line-height:40px;height:40px;color:#000;">. . . . . . . . . . . . . . . . . . . . . . . . . . . . . . . . . . . . . . . . . .</div>
<div class="t" style="left:687.40px;top:671px;font-size:28.8px;line-height:40px;height:40px;color:#000;">4.2</div>
<div class="t" style="left:780.60px;top:671px;font-size:28.8px;line-height:40px;height:40px;color:#000;">Removing and installing intake manifold (left-side)</div>
<div class="t" style="left:1440.12px;top:671px;font-size:28.8px;line-height:40px;height:40px;color:#000;">. . . . . . . . . . . . . . . . . . . . . . . . . . . . . .</div>
<div class="t" style="left:687.40px;top:706px;font-size:28.8px;line-height:40px;height:40px;color:#000;">4.3</div>
<div class="t" style="left:780.60px;top:706px;font-size:28.8px;line-height:40px;height:40px;color:#000;">Removing and installing intake manifold (right-side)</div>
<div class="t" style="left:1457.72px;top:706px;font-size:28.8px;line-height:40px;height:40px;color:#000;">. . . . . . . . . . . . . . . . . . . . . . . . . . . . . .</div>
<div class="t" style="left:687.40px;top:743px;font-size:28.8px;line-height:40px;height:40px;color:#000;">4.4</div>
<div class="t" style="left:780.60px;top:743px;font-size:28.8px;line-height:40px;height:40px;color:#000;">Removing and installing throttle valve module GX3</div>
<div class="t" style="left:1449.75px;top:743px;font-size:28.8px;line-height:40px;height:40px;color:#000;">. . . . . . . . . . . . . . . . . . . . . . . . . . . . . .</div>
<div class="t" style="left:687.40px;top:778px;font-size:28.8px;line-height:40px;height:40px;color:#000;">4.5</div>
<div class="t" style="left:780.60px;top:778px;font-size:28.8px;line-height:40px;height:40px;color:#000;">Cleaning throttle valve module</div>
<div class="t" style="left:1192.02px;top:778px;font-size:28.8px;line-height:40px;height:40px;color:#000;">. . . . . . . . . . . . . . . . . . . . . . . . . . . . . . . . . . . . . . . . . . . . . .</div>
<div class="t hb" style="left:687.40px;top:822px;font-size:28.8px;line-height:40px;height:40px;color:#000;">5</div>
<div class="t hb" style="left:780.60px;top:822px;font-size:28.8px;line-height:40px;height:40px;color:#000;">Injectors</div>
<div class="t hb" style="left:913.44px;top:822px;font-size:28.8px;line-height:40px;height:40px;color:#000;">. . . . . . . . . . . . . . . . . . . . . . . . . . . . . . . . . . . . . . . . . . . . . . . . . . . . . . . . . . . . . . . .</div>
<div class="t" style="left:687.40px;top:857px;font-size:28.8px;line-height:40px;height:40px;color:#000;">5.1</div>
<div class="t" style="left:780.60px;top:857px;font-size:28.8px;line-height:40px;height:40px;color:#000;">Assembly overview - fuel rail with injectors</div>
<div class="t" style="left:1343.97px;top:857px;font-size:28.8px;line-height:40px;height:40px;color:#000;">. . . . . . . . . . . . . . . . . . . . . . . . . . . . . . . . . . . .</div>
<div class="t" style="left:687.40px;top:894px;font-size:28.8px;line-height:40px;height:40px;color:#000;">5.2</div>
<div class="t" style="left:780.60px;top:894px;font-size:28.8px;line-height:40px;height:40px;color:#000;">Removing and installing fuel rail</div>
<div class="t" style="left:1211.22px;top:894px;font-size:28.8px;line-height:40px;height:40px;color:#000;">. . . . . . . . . . . . . . . . . . . . . . . . . . . . . . . . . . . . . . . . . . . . . .</div>
<div class="t" style="left:687.40px;top:930px;font-size:28.8px;line-height:40px;height:40px;color:#000;">5.3</div>
<div class="t" style="left:780.60px;top:930px;font-size:28.8px;line-height:40px;height:40px;color:#000;">Removing and installing injectors</div>
<div class="t" style="left:1225.62px;top:930px;font-size:28.8px;line-height:40px;height:40px;color:#000;">. . . . . . . . . . . . . . . . . . . . . . . . . . . . . . . . . . . . . . . . . . . .</div>
<div class="t" style="left:687.40px;top:966px;font-size:28.8px;line-height:40px;height:40px;color:#000;">5.4</div>
<div class="t" style="left:780.60px;top:966px;font-size:28.8px;line-height:40px;height:40px;color:#000;">Cleaning injectors</div>
<div class="t" style="left:1033.52px;top:966px;font-size:28.8px;line-height:40px;height:40px;color:#000;">. . . . . . . . . . . . . . . . . . . . . . . . . . . . . . . . . . . . . . . . . . . . . . . . . . . . . . . .</div>
<div class="t" style="left:687.40px;top:1002px;font-size:28.8px;line-height:40px;height:40px;color:#000;">5.5</div>
<div class="t" style="left:780.60px;top:1002px;font-size:28.8px;line-height:40px;height:40px;color:#000;">Renewing seals on injector</div>
<div class="t" style="left:1148.80px;top:1002px;font-size:28.8px;line-height:40px;height:40px;color:#000;">. . . . . . . . . . . . . . . . . . . . . . . . . . . . . . . . . . . . . . . . . . . . . . . .</div>
<div class="t hb" style="left:687.40px;top:1046px;font-size:28.8px;line-height:40px;height:40px;color:#000;">6</div>
<div class="t hb" style="left:780.60px;top:1046px;font-size:28.8px;line-height:40px;height:40px;color:#000;">Senders and sensors</div>
<div class="t hb" style="left:1076.77px;top:1046px;font-size:28.8px;line-height:40px;height:40px;color:#000;">. . . . . . . . . . . . . . . . . . . . . . . . . . . . . . . . . . . . . . . . . . . . . . . . . . . . . .</div>
<div class="t" style="left:687.40px;top:1081px;font-size:28.8px;line-height:40px;height:40px;color:#000;">6.1</div>
<div class="t" style="left:780.60px;top:1081px;font-size:28.8px;line-height:40px;height:40px;color:#000;">Removing and installing intake manifold sender GX9/intake manifold sender GX56</div>
<div class="t" style="left:1853.20px;top:1081px;font-size:28.8px;line-height:40px;height:40px;color:#000;">. . . .</div>
<div class="t" style="left:687.40px;top:1117px;font-size:28.8px;line-height:40px;height:40px;color:#000;">6.2</div>
<div class="t" style="left:780.60px;top:1117px;font-size:28.8px;line-height:40px;height:40px;color:#000;">Removing and installing fuel pressure sender G624</div>
<div class="t" style="left:1459.38px;top:1117px;font-size:28.8px;line-height:40px;height:40px;color:#000;">. . . . . . . . . . . . . . . . . . . . . . . . . . . . . .</div>
<div class="t" style="left:687.40px;top:1153px;font-size:28.8px;line-height:40px;height:40px;color:#000;">6.3</div>
<div class="t" style="left:780.60px;top:1153px;font-size:28.8px;line-height:40px;height:40px;color:#000;">Removing and installing fuel pressure sender G247</div>
<div class="t" style="left:1459.38px;top:1153px;font-size:28.8px;line-height:40px;height:40px;color:#000;">. . . . . . . . . . . . . . . . . . . . . . . . . . . . . .</div>
<div class="t" style="left:687.40px;top:1188px;font-size:28.8px;line-height:40px;height:40px;color:#000;">6.4</div>
<div class="t" style="left:780.60px;top:1188px;font-size:28.8px;line-height:40px;height:40px;color:#000;">Removing and installing fuel pressure sender for low pressure G410</div>
<div class="t" style="left:1672.26px;top:1188px;font-size:28.8px;line-height:40px;height:40px;color:#000;">. . . . . . . . . . . . . . . .</div>
<div class="t" style="left:687.40px;top:1226px;font-size:28.8px;line-height:40px;height:40px;color:#000;">6.5</div>
<div class="t" style="left:780.60px;top:1226px;font-size:28.8px;line-height:40px;height:40px;color:#000;">Removing and installing exhaust gas pressure sensor 1 G450</div>
<div class="t" style="left:1590.66px;top:1226px;font-size:28.8px;line-height:40px;height:40px;color:#000;">. . . . . . . . . . . . . . . . . . . . .</div>
<svg style="left:0;top:0" width="1946" height="1240" viewBox="0 0 1946 1240" fill="none"><path d="M-20 76.850 H6.400 L12.350 82.800 V102.750 H-20 Z" stroke="#6e6e6e" stroke-width="2.900" stroke-linejoin="round"/><rect x="-8" y="76.850" width="12" height="7.600" rx="1" stroke="#6e6e6e" stroke-width="2.200"/><rect x="-12" y="93.600" width="17.300" height="9.200" fill="#d2d2d2" stroke="#6e6e6e" stroke-width="2.600"/><polygon points="64.55,76.50 68.61,86.02 78.91,86.93 71.11,93.73 73.43,103.82 64.55,98.50 55.67,103.82 57.99,93.73 50.19,86.93 60.49,86.02" stroke="#6e6e6e" stroke-width="2.700" stroke-linejoin="miter"/><path d="M123.700 97.650 H121.500 A5.900 5.900 0 0 1 121.460 85.800 A8.550 8.550 0 0 1 138.520 84.660 A6.550 6.550 0 0 1 138.800 97.750 H136.300" stroke="#6e6e6e" stroke-width="2.900"/><path d="M130.200 105.600 V87.500 M125.600 92.300 L130.200 87.500 L134.800 92.300" stroke="#6e6e6e" stroke-width="2.800"/><rect x="184.450" y="75.250" width="20.100" height="10" stroke="#6e6e6e" stroke-width="2.900"/><rect x="178" y="82.800" width="32.900" height="14.400" rx="2.600" fill="#6e6e6e"/><rect x="184.450" y="92.350" width="20.100" height="10.400" rx="0.800" fill="#fafafa" stroke="#6e6e6e" stroke-width="2.900"/><path d="M190 95.700 H198.600 M190 98.900 H198.600" stroke="#6e6e6e" stroke-width="1.600"/><circle cx="205" cy="86.400" r="1.200" fill="#fafafa"/><rect x="246.500" y="78.300" width="29.800" height="21.800" rx="0.800" stroke="#6e6e6e" stroke-width="3"/><path d="M246.500 78 L261.400 91.500 L276.300 78 M247 100 L257.500 88.500 M275.800 100 L265.300 88.500" stroke="#6e6e6e" stroke-width="1.900"/><path d="M841.100 76 V98.300 L846.900 93.300 L852.300 103.200 L854.300 102.200 L849.400 92.100 L857.300 91.300 Z" fill="#1f6fcc" stroke="#1f6fcc" stroke-width="1.700" stroke-linejoin="round"/><path d="M906.600 93 V80.700 A2.800 2.800 0 0 1 912.200 80.700 V77.300 A3 3 0 0 1 918.200 77.300 V79.300 A2.700 2.700 0 0 1 923.600 79.300 V83.500 A2.300 2.300 0 0 1 928.200 83.500 V95 C928.200 102 923.500 105.800 916.500 105.800 C910.500 105.800 907.500 103.500 904.800 99.500 L899 91 C897.500 88.800 899.800 87 901.600 88.400 L906.600 93 M912.200 80.700 V90 M918.200 77.300 V90 M923.600 80 V90" stroke="#6e6e6e" stroke-width="2.400" stroke-linejoin="round" stroke-linecap="round"/><path d="M1231.400 72 V82.600 H1253.400 V72" stroke="#1f6fcc" stroke-width="3.700"/><path d="M1231.400 107.800 V89.550 H1246 L1253.400 97 V107.800" stroke="#1f6fcc" stroke-width="3.700"/><path d="M1245.300 90 V97.700 H1253" stroke="#1f6fcc" stroke-width="2.200"/><path d="M1235.200 104.700 H1249.800 M1237.800 102 L1235 104.700 L1237.800 107.400 M1247.200 102 L1250 104.700 L1247.200 107.400" stroke="#1f6fcc" stroke-width="1.700"/><rect x="1311.700" y="76.900" width="29.600" height="9.600" rx="1.500" stroke="#6e6e6e" stroke-width="3"/><path d="M1317.400 79.400 V84.200 M1323.600 79.400 V84.200 M1329.700 79.400 V84.200 M1335.900 79.400 V84.200" stroke="#6e6e6e" stroke-width="2.500"/><path d="M1326.600 90 V105 M1319.600 98.300 L1326.600 105.300 L1333.600 98.300" stroke="#6e6e6e" stroke-width="3"/><rect x="1410" y="76.800" width="26.600" height="19.900" rx="1.500" fill="#e3e3e3" stroke="#6e6e6e" stroke-width="3"/><path d="M1417 97 L1417.300 105.600 L1425.200 97 Z" fill="#6e6e6e" stroke="#6e6e6e" stroke-width="1" stroke-linejoin="round"/><path d="M1414.700 85 H1431.600 M1414.700 89.200 H1428.200" stroke="#6e6e6e" stroke-width="1.500"/><rect x="1482.300" y="99.300" width="22.900" height="6.200" fill="#dcdcdc"/><path d="M1500.300 78.500 L1485.300 95.500" stroke="#6e6e6e" stroke-width="11.400" stroke-linecap="round"/><path d="M1500.300 78.500 L1486.300 94.400" stroke="#dddddd" stroke-width="5.800" stroke-linecap="round"/><path d="M1478.300 93.300 L1488 101.300 L1481.800 104.300 H1472.600 L1474.300 100.300 Z" fill="#6e6e6e"/><path d="M1478.600 99.200 L1482.600 102.700" stroke="#fafafa" stroke-width="1"/><path d="M1556.800 73.800 L1569.800 86.300 L1565 89.800 L1553 78.300 Z" fill="#d4d4d4"/><path d="M1556 74.400 L1553.300 80.500" stroke="#6e6e6e" stroke-width="2.600" stroke-linecap="round"/><path d="M1569 86.500 L1562.500 88" stroke="#6e6e6e" stroke-width="2.200" stroke-linecap="round"/><path d="M1553.500 80.700 L1541.700 87.300 L1538.600 103 L1553.600 100.200 L1561.700 88.300 Z" stroke="#6e6e6e" stroke-width="2.800" stroke-linejoin="round"/><circle cx="1549" cy="92.800" r="1.900" stroke="#6e6e6e" stroke-width="1.600"/><path d="M1547.500 94.300 L1539.800 102" stroke="#6e6e6e" stroke-width="1.600"/><path d="M1558 103.300 c1.500 -4 3 -5 3.500 -3 c0.400 1.800 -0.800 3.800 0.600 3.800 c1.600 0 2.500 -4.500 3.800 -3.600 c1 0.800 0 3.400 1.300 3.400 c1 0 1.800 -1.200 2.600 -2.400" stroke="#6e6e6e" stroke-width="1.800" stroke-linecap="round"/><path d="M1608.500 79.800 V74.900 H1619.800 L1630.600 84.500 V87.500" stroke="#6e6e6e" stroke-width="2.900" stroke-linejoin="round"/><path d="M1619.800 75.500 V84.300 H1630" stroke="#6e6e6e" stroke-width="1.800"/><rect x="1602.300" y="80.100" width="12.700" height="7.900" rx="0.800" fill="#6e6e6e"/><path d="M1608.500 92 V103.700 H1615.800" stroke="#6e6e6e" stroke-width="2.900"/><path d="M1634.300 90.400 L1622 102.700" stroke="#6e6e6e" stroke-width="7.600" stroke-linecap="round"/><path d="M1634.300 90.400 L1621 103.700" stroke="#fafafa" stroke-width="2.600" stroke-linecap="round"/><path d="M1619.400 100.300 L1617.600 106.900 L1624.300 105.200 Z" fill="#fafafa" stroke="#6e6e6e" stroke-width="2" stroke-linejoin="round"/><path d="M29.500 226.500 L17.500 240.200 L29.500 253.800 Z" fill="#fafafa"/><path d="M28.700 226.500 L17.200 240.200 L28.700 253.800" stroke="#d8d8d8" stroke-width="1.100"/><path d="M-10 155.700 H2.600 L11 164.600 V176.400 H4.500" stroke="#6e6e6e" stroke-width="2.900" stroke-linejoin="round"/><path d="M2.500 156.500 V164.300 H10" stroke="#6e6e6e" stroke-width="2"/><path d="M2.600 177 V183.500 H-10" stroke="#6e6e6e" stroke-width="2.900" stroke-linejoin="round"/><path d="M-10 226 H2.600 V253.300 L-2 249" stroke="#1f6fcc" stroke-width="3.200" stroke-linejoin="miter"/><path d="M-3 292.300 C2 292.800 8.600 296.500 7.600 304.800 L-3 316" stroke="#6e6e6e" stroke-width="2.800" stroke-linecap="round"/><path d="M-3 308 L5.800 298.800" stroke="#6e6e6e" stroke-width="2.800" stroke-linecap="round"/><rect x="56.050" y="206.900" width="26.250" height="22.100" rx="1.500" stroke="#6e6e6e" stroke-width="3"/><circle cx="63.100" cy="214" r="2.500" fill="#6e6e6e"/><circle cx="63.100" cy="221.800" r="2.500" fill="#6e6e6e"/><path d="M67.800 214 H76.600 M67.800 221.800 H76.600" stroke="#6e6e6e" stroke-width="2.800"/><path d="M90 215.300 H100.500 L95.250 221.100 Z" fill="#6e6e6e"/><path d="M130.700 206 H161.500" stroke="#6e6e6e" stroke-width="2.800"/><path d="M141.800 205.500 V203 H150.900 V205.500" stroke="#6e6e6e" stroke-width="2.600" stroke-linejoin="round"/><path d="M134.500 207 L136.900 231.800 H155.300 L157.700 207" stroke="#6e6e6e" stroke-width="2.800" stroke-linejoin="round"/><path d="M142 211.500 L142.800 227.500 M146.100 211.500 V227.500 M150.200 211.500 L149.400 227.500" stroke="#6e6e6e" stroke-width="1.600"/><path d="M182.600 231 V202.700 H200.200 V217" stroke="#6e6e6e" stroke-width="2.800" stroke-linejoin="round"/><path d="M182.200 232.600 L192.300 223.300 L195.500 226" stroke="#6e6e6e" stroke-width="2.800" stroke-linejoin="round" stroke-linecap="round"/><circle cx="204.700" cy="226.400" r="8.700" fill="#6e6e6e"/><path d="M199.700 226.400 H209.700 M204.700 221.400 V231.400" stroke="#fafafa" stroke-width="2.600"/><path d="M236 231 V202.700 H255.100 V217" stroke="#6e6e6e" stroke-width="2.800" stroke-linejoin="round"/><path d="M235.600 232.600 L245.400 223.900 L250 228" stroke="#6e6e6e" stroke-width="2.800" stroke-linejoin="round" stroke-linecap="round"/><circle cx="245.400" cy="213.400" r="4.300" stroke="#6e6e6e" stroke-width="1.700"/><path d="M245.400 206.600 V210 M245.400 216.800 V220.200 M238.600 213.400 H242 M248.800 213.400 H252.200" stroke="#6e6e6e" stroke-width="1.700"/><path d="M252.400 217.400 V234.600 L256.800 230.300 L264.200 229.400 Z" fill="#6e6e6e"/></svg>
</body></html>
